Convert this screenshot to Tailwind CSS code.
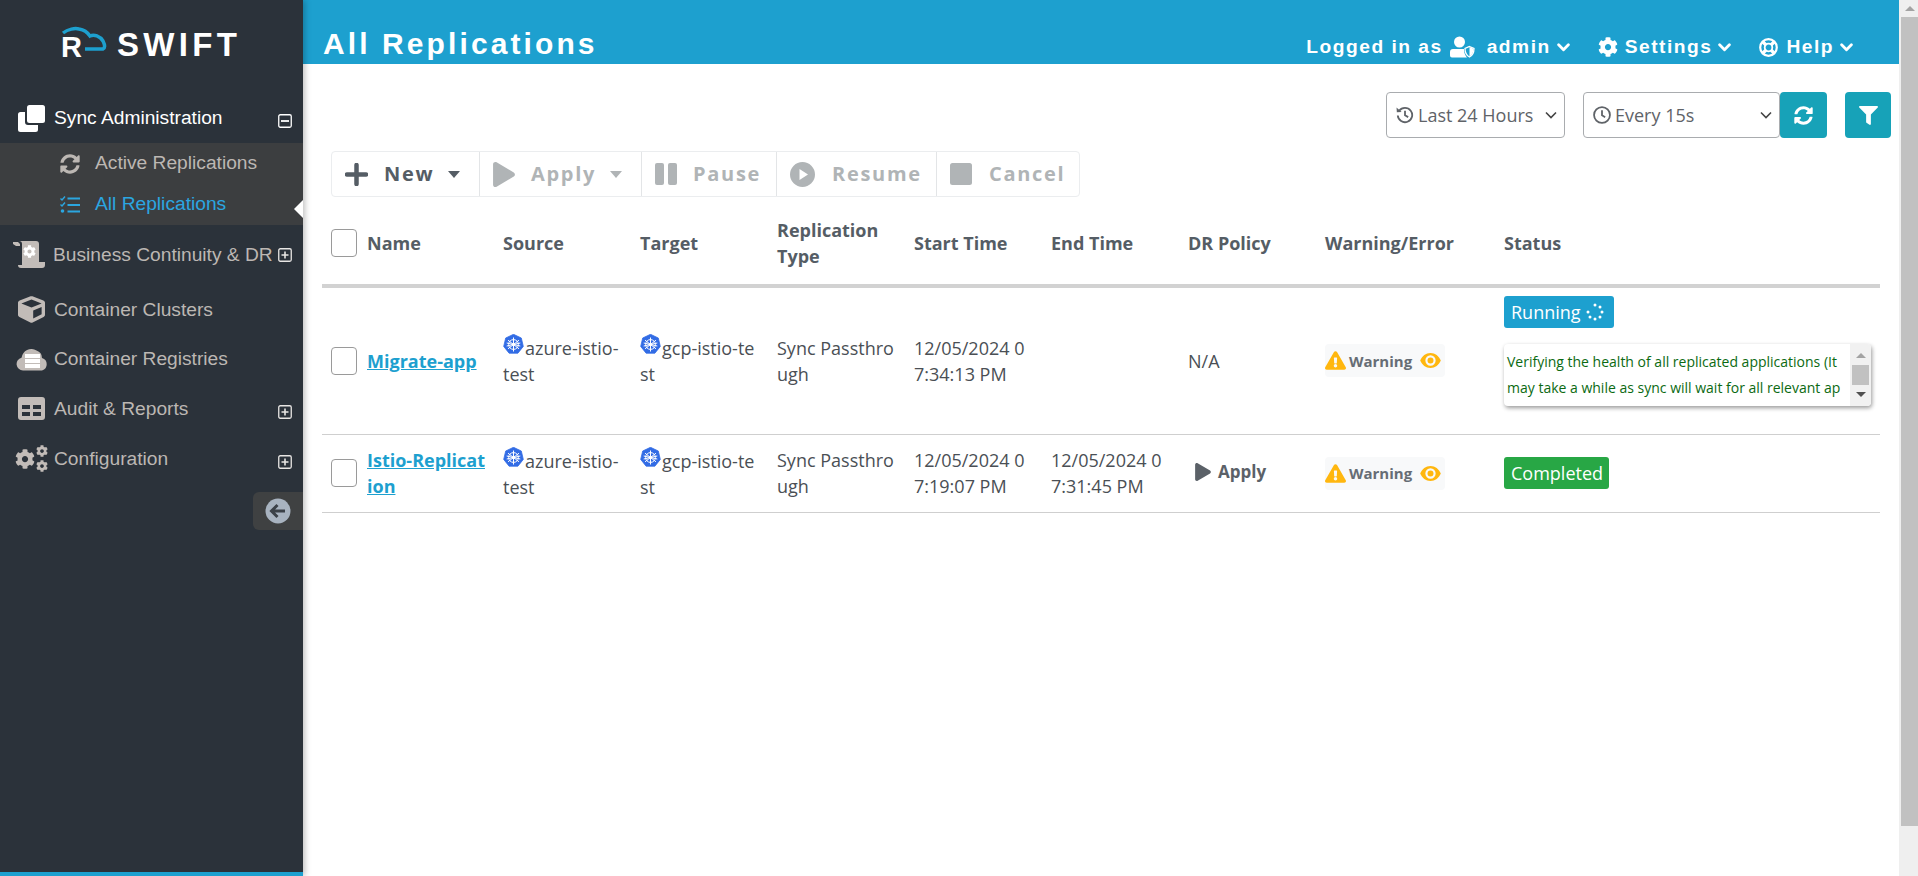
<!DOCTYPE html>
<html lang="en">
<head>
<meta charset="utf-8">
<title>All Replications</title>
<script src="https://cdn.jsdelivr.net/npm/@tailwindcss/browser@4"></script>
</head>
<body class="h-[876px] overflow-hidden bg-white font-['Open_Sans',sans-serif] text-[18px] text-[#4a4f55]">
<svg class="hidden">
  <defs>
    <symbol id="cog" viewBox="0 0 512 512"><path fill="currentColor" d="M487.4 315.7l-42.6-24.6c4.3-23.2 4.3-47 0-70.2l42.6-24.6c4.9-2.8 7.1-8.6 5.5-14-11.1-35.6-30-67.8-54.7-94.6-3.8-4.1-10-5.1-14.8-2.3L380.8 110c-17.9-15.4-38.5-27.3-60.8-35.1V25.8c0-5.6-3.9-10.5-9.4-11.7-36.7-8.2-74.3-7.8-109.2 0-5.5 1.2-9.4 6.1-9.4 11.7V75c-22.2 7.9-42.8 19.8-60.8 35.1L88.7 85.5c-4.9-2.8-11-1.9-14.8 2.3-24.7 26.7-43.6 58.9-54.7 94.6-1.7 5.4.6 11.2 5.5 14L67.3 221c-4.3 23.2-4.3 47 0 70.2l-42.6 24.6c-4.9 2.8-7.1 8.6-5.5 14 11.1 35.6 30 67.8 54.7 94.6 3.8 4.1 10 5.1 14.8 2.3l42.6-24.6c17.9 15.4 38.5 27.3 60.8 35.1v49.2c0 5.6 3.9 10.5 9.4 11.7 36.7 8.2 74.3 7.8 109.2 0 5.5-1.2 9.4-6.1 9.4-11.7v-49.2c22.2-7.9 42.8-19.8 60.8-35.1l42.6 24.6c4.9 2.8 11 1.9 14.8-2.3 24.7-26.7 43.6-58.9 54.7-94.6 1.5-5.5-.7-11.3-5.6-14.1zM256 336c-44.1 0-80-35.9-80-80s35.9-80 80-80 80 35.9 80 80-35.9 80-80 80z"/></symbol>
    <symbol id="sync" viewBox="0 0 512 512"><path fill="currentColor" d="M370.72 133.28C339.458 104.008 298.888 87.962 255.848 88c-77.458.068-144.328 53.178-162.791 126.85-1.344 5.363-6.122 9.15-11.651 9.15H24.103c-7.498 0-13.194-6.807-11.807-14.176C33.933 94.924 134.813 8 256 8c66.448 0 126.791 26.136 171.315 68.685L463.03 40.97C478.149 25.851 504 36.559 504 57.941V192c0 13.255-10.745 24-24 24H345.941c-21.382 0-32.09-25.851-16.971-40.971l41.75-41.749zM32 296h134.059c21.382 0 32.09 25.851 16.971 40.971l-41.75 41.75c31.262 29.273 71.835 45.319 114.876 45.28 77.418-.07 144.315-53.144 162.787-126.849 1.344-5.363 6.122-9.15 11.651-9.15h57.304c7.498 0 13.194 6.807 11.807 14.176C478.067 417.076 377.187 504 256 504c-66.448 0-126.791-26.136-171.315-68.685L48.97 471.03C33.851 486.149 8 475.441 8 454.059V320c0-13.255 10.745-24 24-24z"/></symbol>
    <symbol id="play" viewBox="0 0 448 512"><path fill="currentColor" d="M424.4 214.7L72.4 6.6C43.8-10.3 0 6.1 0 47.9V464c0 37.5 40.7 60.1 72.4 41.3l352-208c31.4-18.5 31.5-64.1 0-82.6z"/></symbol>
    <symbol id="warn" viewBox="0 0 576 512"><path fill="#ffb70f" d="M569.517 440.013C587.975 472.007 564.806 512 527.94 512H48.054c-36.937 0-59.999-40.055-41.577-71.987L246.423 23.985c18.467-32.009 64.72-31.951 83.154 0l239.94 416.028zM288 354c-25.405 0-46 20.595-46 46s20.595 46 46 46 46-20.595 46-46-20.595-46-46-46zm-43.673-165.346l7.418 136c.347 6.364 5.609 11.346 11.982 11.346h48.546c6.373 0 11.635-4.982 11.982-11.346l7.418-136c.375-6.874-5.098-12.654-11.982-12.654h-63.383c-6.884 0-12.356 5.78-11.981 12.654z"/></symbol>
    <symbol id="eye" viewBox="0 0 22 16"><path fill="#ffb70f" fill-rule="evenodd" d="M11 0C6 0 2 3.200 0 8c2 4.800 6 8 11 8s9-3.200 11-8c-2-4.800-6-8-11-8zm0 2.500a5.500 5.500 0 1 1 0 11 5.500 5.500 0 0 1 0-11zm0 2.300a3.200 3.200 0 1 0 0 6.400 3.200 3.200 0 0 0 0-6.400z"/></symbol>
    <symbol id="k8s" viewBox="0 0 20 21">
      <path fill="#326ce5" d="M10 0.300 17.800 4 19.800 12.400 14.400 19.200 5.600 19.200 0.200 12.400 2.200 4Z" stroke="#326ce5" stroke-width="0.800" stroke-linejoin="round"/>
      <g stroke="#fff" fill="none" stroke-width="1"><circle cx="10" cy="10.500" r="4.900"/><circle cx="10" cy="10.500" r="1.300" fill="#fff"/><path d="M10 3.500V17.500M4.500 6.200 15.500 14.800M15.500 6.200 4.500 14.800M3.200 12 16.800 9M16.800 12 3.200 9"/></g>
    </symbol>
    <symbol id="plusbox" viewBox="0 0 14 14"><rect x="0.750" y="0.750" width="12.500" height="12.500" rx="1.500" fill="none" stroke="#e8e6e4" stroke-width="1.300"/><path d="M3.500 7h7M7 3.500v7" stroke="#e8e6e4" stroke-width="1.600"/></symbol>
    <symbol id="chev" viewBox="0 0 12 8"><path d="M1.500 1.500 6 6l4.500-4.500" fill="none" stroke="currentColor" stroke-width="2.600" stroke-linecap="round" stroke-linejoin="round"/></symbol>
    <symbol id="chevthin" viewBox="0 0 12 8"><path d="M1 1.500 6 6.500l5-5" fill="none" stroke="currentColor" stroke-width="1.600"/></symbol>
  </defs>
</svg>

<div class="flex h-[876px]">
  <!-- Sidebar -->
  <aside class="relative z-10 flex h-full w-[303px] shrink-0 flex-col border-b-4 border-[#1da0cf] bg-[#2b323a] font-['Liberation_Sans',sans-serif] text-[19.200px] text-[#bcb7b3] shadow-[2px_0_6px_rgba(0,0,0,0.25)]">
    <div class="relative h-[94px] shrink-0">
      <svg class="absolute left-[60px] top-[26px]" width="48" height="28" viewBox="60 26 48 28"><path d="M63 33C68 29 75 28 79 29 85 30 88 33 90 36 94 34 100 36 103 41 105 45 105 48 103 49L85 49" fill="none" stroke="#1da0cf" stroke-width="3.500"/></svg>
      <span class="absolute left-[61px] top-[31px] text-[29px] font-bold leading-[32px] text-white">R</span>
      <span class="absolute left-[117px] top-[26px] text-[33px] font-bold leading-[38px] tracking-[4.300px] text-white">SWIFT</span>
    </div>
    <div class="flex h-[49px] shrink-0 items-center text-white">
      <svg class="ml-[18px] mr-[9px] mb-[1px]" width="27" height="27" viewBox="0 0 27 27"><path fill="#fff" d="M9 2.500A2.500 2.500 0 0 1 11.500 0h13A2.500 2.500 0 0 1 27 2.500v13a2.500 2.500 0 0 1-2.500 2.500h-13A2.500 2.500 0 0 1 9 15.500z"/><path fill="#fff" d="M7 7H2.500A2.500 2.500 0 0 0 0 9.500v15A2.500 2.500 0 0 0 2.500 27h15a2.500 2.500 0 0 0 2.500-2.500V20H10a3 3 0 0 1-3-3z"/></svg>
      <span>Sync Administration</span>
      <svg class="ml-auto mr-[11px] mt-[5px]" width="14" height="14" viewBox="0 0 14 14"><rect x="0.750" y="0.750" width="12.500" height="12.500" rx="1.500" fill="none" stroke="#fff" stroke-width="1.300"/><path d="M3 7h8" stroke="#fff" stroke-width="1.800"/></svg>
    </div>
    <div class="relative h-[82px] shrink-0 bg-[#3c3e40]">
      <div class="flex h-[41px] items-center">
        <svg class="ml-[60px] mr-[15px] text-[#bcb7b3]" width="20" height="20"><use href="#sync"/></svg>
        <span>Active Replications</span>
      </div>
      <div class="flex h-[41px] items-center text-[#2ba6e0]">
        <svg class="ml-[60px] mr-[15px]" width="20" height="18" viewBox="0 0 20 18"><path d="M0.500 2.500 2 4l3-3.500M0.500 8.500 2 10l3-3.500" fill="none" stroke="currentColor" stroke-width="1.400"/><circle cx="2.500" cy="15" r="1.800" fill="currentColor"/><path d="M7.500 2.500H20M7.500 9H20M7.500 15.500H20" stroke="currentColor" stroke-width="2"/></svg>
        <span>All Replications</span>
      </div>
      <span class="absolute right-0 top-[57px] h-0 w-0 border-y-[9px] border-r-[9px] border-y-transparent border-r-white"></span>
    </div>
    <div class="flex h-[60px] shrink-0 items-center">
      <svg class="ml-[12px] mr-[8px]" width="33" height="28" viewBox="0 0 33 28"><path fill="#c2bcb8" d="M1 1h5l2 2v2H4L1 3zM7 0h17a3 3 0 0 1 3 3v18h6v3a3 3 0 0 1-3 3H9a3 3 0 0 1-3-3h4V3a3 3 0 0 0-3-3z"/><use href="#cog" x="11" y="4" width="13" height="13" class="text-white"/></svg>
      <span class="whitespace-nowrap">Business Continuity &amp; DR</span>
      <svg class="ml-auto mr-[11px]" width="14" height="14"><use href="#plusbox"/></svg>
    </div>
    <div class="flex h-[50px] shrink-0 items-center">
      <svg class="ml-[18px] mr-[9px] mb-[2px]" width="27" height="27" viewBox="0 0 512 512"><path fill="#c2bcb8" d="M239.100 6.300l-208 78c-18.700 7-31.100 25-31.100 45v225.100c0 18.200 10.300 34.800 26.500 42.900l208 104c13.500 6.800 29.400 6.800 42.900 0l208-104c16.300-8.100 26.500-24.800 26.500-42.900V129.300c0-20-12.400-37.900-31.100-44.900l-208-78C262 2.200 250 2.200 239.100 6.300zM256 68.400l192 72v1.100l-192 78-192-78v-1.100l192-72zm32 356V275.500l160-65v133.900l-160 80z"/></svg>
      <span>Container Clusters</span>
    </div>
    <div class="flex h-[49px] shrink-0 items-center">
      <svg class="ml-[16px] mr-[5px] mb-[1px]" width="33" height="24" viewBox="0 0 33 24"><path fill="#c2bcb8" d="M7 23.500A6.500 6.500 0 0 1 5.500 10.700 10 10 0 0 1 20.500 3.500 8 8 0 0 1 26 11a6.500 6.500 0 0 1 0 12.500z"/><path fill="#fff" d="M9 7h15v4H9zM9 12h15v4H9zM9 17h15v4H9z"/></svg>
      <span>Container Registries</span>
    </div>
    <div class="flex h-[50px] shrink-0 items-center">
      <svg class="ml-[18px] mr-[9px] mb-[2px]" width="27" height="23" viewBox="0 0 27 23"><path fill="#c2bcb8" fill-rule="evenodd" d="M3 0h21a3 3 0 0 1 3 3v17a3 3 0 0 1-3 3H3a3 3 0 0 1-3-3V3a3 3 0 0 1 3-3zM4 8v4h8V8zm11 0v4h8V8zM4 15v4h8v-4zm11 0v4h8v-4z"/></svg>
      <span>Audit &amp; Reports</span>
      <svg class="ml-auto mr-[11px] mt-[6px]" width="14" height="14"><use href="#plusbox"/></svg>
    </div>
    <div class="flex h-[50px] shrink-0 items-center">
      <svg class="ml-[15px] mr-[6px] mb-[2px] text-[#c2bcb8]" width="33" height="27" viewBox="0 0 33 27"><use href="#cog" x="0" y="4" width="20" height="20"/><use href="#cog" x="21" y="0" width="12" height="12"/><use href="#cog" x="21" y="15" width="12" height="12"/></svg>
      <span>Configuration</span>
      <svg class="ml-auto mr-[11px] mt-[6px]" width="14" height="14"><use href="#plusbox"/></svg>
    </div>
    <div class="ml-auto mt-[8px] flex h-[38px] w-[50px] items-center rounded-l-[6px] bg-[#3f4142] pl-[12px]">
      <svg width="26" height="26" viewBox="0 0 26 26"><circle cx="13" cy="13" r="12.500" fill="#a8b3c0"/><path d="M20 13H7M12.500 7 6.500 13l6 6" fill="none" stroke="#3b4148" stroke-width="3"/></svg>
    </div>
  </aside>

  <!-- Main -->
  <main class="flex h-full min-w-0 flex-1 flex-col">
    <header class="flex h-[64px] shrink-0 items-end justify-between bg-[#1da0cf] pl-[20px] pr-[46px] text-white font-['Liberation_Sans',sans-serif] font-bold">
      <h1 class="mb-[2px] text-[30px] leading-[36px] tracking-[3.100px]">All Replications</h1>
      <nav class="mb-[5px] flex items-center text-[19.200px] leading-[24px] tracking-[1.500px]">
        <span>Logged in as</span>
        <svg class="ml-[7px]" width="25" height="22" viewBox="0 0 25 22"><circle cx="9.500" cy="6" r="5.500" fill="#fff"/><path fill="#fff" d="M3 13h11a3 3 0 0 0 0 1c0 3 1.500 5.500 3 7.500H2a2 2 0 0 1-2-2V16a3 3 0 0 1 3-3z"/><path d="M19.500 10.500 24 12.500c0 4-1.500 7-4.500 8.500-3-1.500-4.500-4.500-4.500-8.500z" fill="none" stroke="#fff" stroke-width="1.300"/><path d="M19.500 11v9.500c2.500-1.500 4-4 4-7.800z" fill="#fff"/></svg>
        <span class="ml-[12px]">admin</span>
        <svg class="ml-[6px]" width="13" height="9"><use href="#chev"/></svg>
        <svg class="ml-[28px]" width="20" height="20"><use href="#cog"/></svg>
        <span class="ml-[7px]">Settings</span>
        <svg class="ml-[6px]" width="13" height="9"><use href="#chev"/></svg>
        <svg class="ml-[28px]" width="19" height="19" viewBox="0 0 19 19"><circle cx="9.500" cy="9.500" r="8.300" fill="none" stroke="#fff" stroke-width="2.200"/><circle cx="9.500" cy="9.500" r="3.800" fill="none" stroke="#fff" stroke-width="1.800"/><path d="M3.500 3.500 7 7M15.500 3.500 12 7M3.500 15.500 7 12M15.500 15.500 12 12" stroke="#fff" stroke-width="3.200"/></svg>
        <span class="ml-[8px]">Help</span>
        <svg class="ml-[6px]" width="13" height="9"><use href="#chev"/></svg>
      </nav>
    </header>

    <div class="min-h-0 flex-1 pl-[19px] pr-[19px]">
      <!-- Filters -->
      <div class="mt-[28px] flex h-[46px] items-stretch justify-end text-[18px] text-[#5f6368]">
        <div class="mr-[18px] flex w-[179px] items-center rounded-[4px] border border-[#a9acaf] pl-[9px] pr-[7px]">
          <svg width="18" height="18" viewBox="0 0 17 17"><path d="M3 4.500A6.800 6.800 0 1 1 1.700 9" fill="none" stroke="#5f6368" stroke-width="1.700"/><path d="M0.500 1.500 0.800 6l4.500-.300z" fill="#5f6368"/><path d="M8.500 4.500v4.300l3 1.700" fill="none" stroke="#5f6368" stroke-width="1.700"/></svg>
          <span class="ml-[4px]">Last 24 Hours</span>
          <svg class="ml-auto text-[#444]" width="12" height="8"><use href="#chevthin"/></svg>
        </div>
        <div class="flex w-[197px] items-center rounded-[4px] border border-[#a9acaf] pl-[9px] pr-[7px]">
          <svg width="18" height="18" viewBox="0 0 17 17"><circle cx="8.500" cy="8.500" r="7.500" fill="none" stroke="#5f6368" stroke-width="1.700"/><path d="M8.500 4v4.800l3 1.800" fill="none" stroke="#5f6368" stroke-width="1.700"/></svg>
          <span class="ml-[4px]">Every 15s</span>
          <svg class="ml-auto text-[#444]" width="12" height="8"><use href="#chevthin"/></svg>
        </div>
        <div class="flex w-[47px] items-center justify-center rounded-[4px] bg-[#17a2b8] text-white">
          <svg width="19" height="19"><use href="#sync"/></svg>
        </div>
        <div class="ml-[18px] mr-[-11px] flex w-[46px] items-center justify-center rounded-[4px] bg-[#17a2b8] text-white">
          <svg width="19" height="19" viewBox="0 0 512 512"><path fill="#fff" d="M487.976 0H24.028C2.710 0-8.047 25.866 7.058 40.971L192 225.941V432c0 7.831 3.821 15.170 10.237 19.662l80 55.980C298.020 518.690 320 507.493 320 487.980V225.941l184.947-184.970C520.021 25.896 509.338 0 487.976 0z"/></svg>
        </div>
      </div>

      <!-- Toolbar -->
      <div class="ml-[9px] mt-[13px] flex h-[46px] w-[749px] items-stretch rounded-[4px] border border-[#ebedef] text-[20px] font-bold tracking-[1.700px] text-[#b0b4b6]">
        <div class="flex w-[148px] items-center border-r border-[#e3e5e7] pl-[13px] text-[#555d65]">
          <svg width="23" height="23" viewBox="0 0 23 23"><path d="M11.500 2v19M2 11.500h19" stroke="currentColor" stroke-width="4.500" stroke-linecap="round"/></svg>
          <span class="ml-[16px]">New</span>
          <span class="ml-[14px] h-0 w-0 border-x-[6px] border-t-[7px] border-x-transparent border-t-current"></span>
        </div>
        <div class="flex w-[162px] items-center border-r border-[#e3e5e7] pl-[13px]">
          <svg width="22" height="25"><use href="#play"/></svg>
          <span class="ml-[16px]">Apply</span>
          <span class="ml-[14px] h-0 w-0 border-x-[6px] border-t-[7px] border-x-transparent border-t-current"></span>
        </div>
        <div class="flex w-[135px] items-center border-r border-[#e3e5e7] pl-[13px]">
          <svg width="22" height="22" viewBox="0 0 22 22"><rect x="0" y="0" width="9" height="22" rx="2" fill="currentColor"/><rect x="13" y="0" width="9" height="22" rx="2" fill="currentColor"/></svg>
          <span class="ml-[16px]">Pause</span>
        </div>
        <div class="flex w-[160px] items-center border-r border-[#e3e5e7] pl-[13px]">
          <svg width="25" height="25" viewBox="0 0 25 25"><path fill="currentColor" fill-rule="evenodd" d="M12.500 0a12.500 12.500 0 1 1 0 25 12.500 12.500 0 0 1 0-25zM9.500 7v11l8.500-5.500z"/></svg>
          <span class="ml-[17px]">Resume</span>
        </div>
        <div class="flex flex-1 items-center pl-[13px]">
          <svg width="22" height="22" viewBox="0 0 22 22"><rect width="22" height="22" rx="2.500" fill="currentColor"/></svg>
          <span class="ml-[17px]">Cancel</span>
        </div>
      </div>

      <!-- Table -->
      <table class="mt-[5px] w-[1558px] table-fixed border-collapse leading-[26px]">
        <colgroup>
          <col class="w-[37px]"><col class="w-[136px]"><col class="w-[137px]"><col class="w-[137px]"><col class="w-[137px]"><col class="w-[137px]"><col class="w-[137px]"><col class="w-[137px]"><col class="w-[179px]"><col class="w-[384px]">
        </colgroup>
        <thead>
          <tr class="h-[84px] border-b-4 border-[#d2d2d2] text-left font-bold text-[#555d65]">
            <th class="pl-[9px]"><span class="block h-[28px] w-[26px] rounded-[4px] border border-[#9a9a9a] bg-white"></span></th>
            <th class="px-2 font-bold">Name</th>
            <th class="px-2 font-bold">Source</th>
            <th class="px-2 font-bold">Target</th>
            <th class="px-2 font-bold">Replication Type</th>
            <th class="px-2 font-bold">Start Time</th>
            <th class="px-2 font-bold">End Time</th>
            <th class="px-2 font-bold">DR Policy</th>
            <th class="px-2 font-bold">Warning/Error</th>
            <th class="px-2 font-bold">Status</th>
          </tr>
        </thead>
        <tbody class="break-all">
          <tr class="h-[148px] border-b border-[#cfcfcf]">
            <td class="pl-[9px]"><span class="block h-[28px] w-[26px] rounded-[4px] border border-[#9a9a9a] bg-white"></span></td>
            <td class="px-2"><a class="font-bold text-[#1da0cf] underline">Migrate-app</a></td>
            <td class="px-2"><svg class="mr-[1px] inline-block align-baseline" width="21" height="21"><use href="#k8s"/></svg>azure-istio-test</td>
            <td class="px-2"><svg class="mr-[1px] inline-block align-baseline" width="21" height="21"><use href="#k8s"/></svg>gcp-istio-test</td>
            <td class="px-2">Sync Passthrough</td>
            <td class="px-2">12/05/2024 07:34:13 PM</td>
            <td class="px-2"></td>
            <td class="px-2">N/A</td>
            <td class="px-2">
              <span class="inline-flex h-[33px] w-[120px] items-center rounded-[4px] bg-[#f8f9fa] text-[15px] font-bold text-[#666d75]">
                <svg width="21" height="19"><use href="#warn"/></svg>
                <span class="ml-[3px]">Warning</span>
                <svg class="ml-[8px]" width="21" height="15"><use href="#eye"/></svg>
              </span>
            </td>
            <td class="px-2 pb-[20px]">
              <span class="flex h-[32px] w-[110px] items-center rounded-[3px] bg-[#1da0cf] pl-[7px] text-[18px] text-white">Running
                <svg class="ml-[5px]" width="18" height="18" viewBox="0 0 18 18"><g fill="#fff"><circle cx="9" cy="2" r="1.500"/><circle cx="14" cy="4" r="1.500"/><circle cx="16" cy="9" r="1.500"/><circle cx="14" cy="14" r="1.500"/><circle cx="9" cy="16" r="1.500"/><circle cx="4" cy="14" r="1.500"/><circle cx="2" cy="9" r="1.500"/></g></svg>
              </span>
              <div class="mt-[16px] flex h-[62px] w-[367px] overflow-hidden rounded-[4px] bg-white shadow-[1px_2px_4px_rgba(0,0,0,0.4)]">
                <div class="flex-1 whitespace-nowrap overflow-hidden pl-[3px] pt-[5px] text-[14px] text-[#0b6a12]">Verifying the health of all replicated applications (It<br>may take a while as sync will wait for all relevant ap</div>
                <div class="flex w-[21px] flex-col items-center bg-[#f1f1f1]">
                  <span class="mt-[9px] h-0 w-0 border-x-[5px] border-b-[5px] border-x-transparent border-b-[#a3a3a3]"></span>
                  <span class="mt-[7px] h-[20px] w-[17px] bg-[#c1c1c1]"></span>
                  <span class="mt-[7px] h-0 w-0 border-x-[5px] border-t-[5px] border-x-transparent border-t-[#505050]"></span>
                </div>
              </div>
            </td>
          </tr>
          <tr class="h-[78px] border-b border-[#cfcfcf]">
            <td class="pl-[9px]"><span class="block h-[28px] w-[26px] rounded-[4px] border border-[#9a9a9a] bg-white"></span></td>
            <td class="px-2"><a class="font-bold text-[#1da0cf] underline">Istio-Replication</a></td>
            <td class="px-2"><svg class="mr-[1px] inline-block align-baseline" width="21" height="21"><use href="#k8s"/></svg>azure-istio-test</td>
            <td class="px-2"><svg class="mr-[1px] inline-block align-baseline" width="21" height="21"><use href="#k8s"/></svg>gcp-istio-test</td>
            <td class="px-2">Sync Passthrough</td>
            <td class="px-2">12/05/2024 07:19:07 PM</td>
            <td class="px-2">12/05/2024 07:31:45 PM</td>
            <td class="px-2">
              <span class="ml-[7px] inline-flex items-center font-bold text-[#5b6168]">
                <svg width="16" height="18" class="text-[#5b6168]"><use href="#play"/></svg>
                <span class="ml-[7px] text-[17px]">Apply</span>
              </span>
            </td>
            <td class="px-2">
              <span class="inline-flex h-[33px] w-[120px] items-center rounded-[4px] bg-[#f8f9fa] text-[15px] font-bold text-[#666d75]">
                <svg width="21" height="19"><use href="#warn"/></svg>
                <span class="ml-[3px]">Warning</span>
                <svg class="ml-[8px]" width="21" height="15"><use href="#eye"/></svg>
              </span>
            </td>
            <td class="px-2">
              <span class="flex h-[32px] w-[105px] items-center rounded-[3px] bg-[#28a745] pl-[7px] text-[18px] text-white">Completed</span>
            </td>
          </tr>
        </tbody>
      </table>
    </div>
  </main>

  <!-- Page scrollbar -->
  <div class="flex h-full w-[19px] shrink-0 flex-col items-end bg-[#efefef]">
    <div class="flex h-[17px] w-[17px] items-center justify-center"><span class="h-0 w-0 border-x-[5px] border-b-[5px] border-x-transparent border-b-[#a3a3a3]"></span></div>
    <div class="h-[809px] w-[17px] bg-[#c1c1c1]"></div>
  </div>
</div>
</body>
</html>
